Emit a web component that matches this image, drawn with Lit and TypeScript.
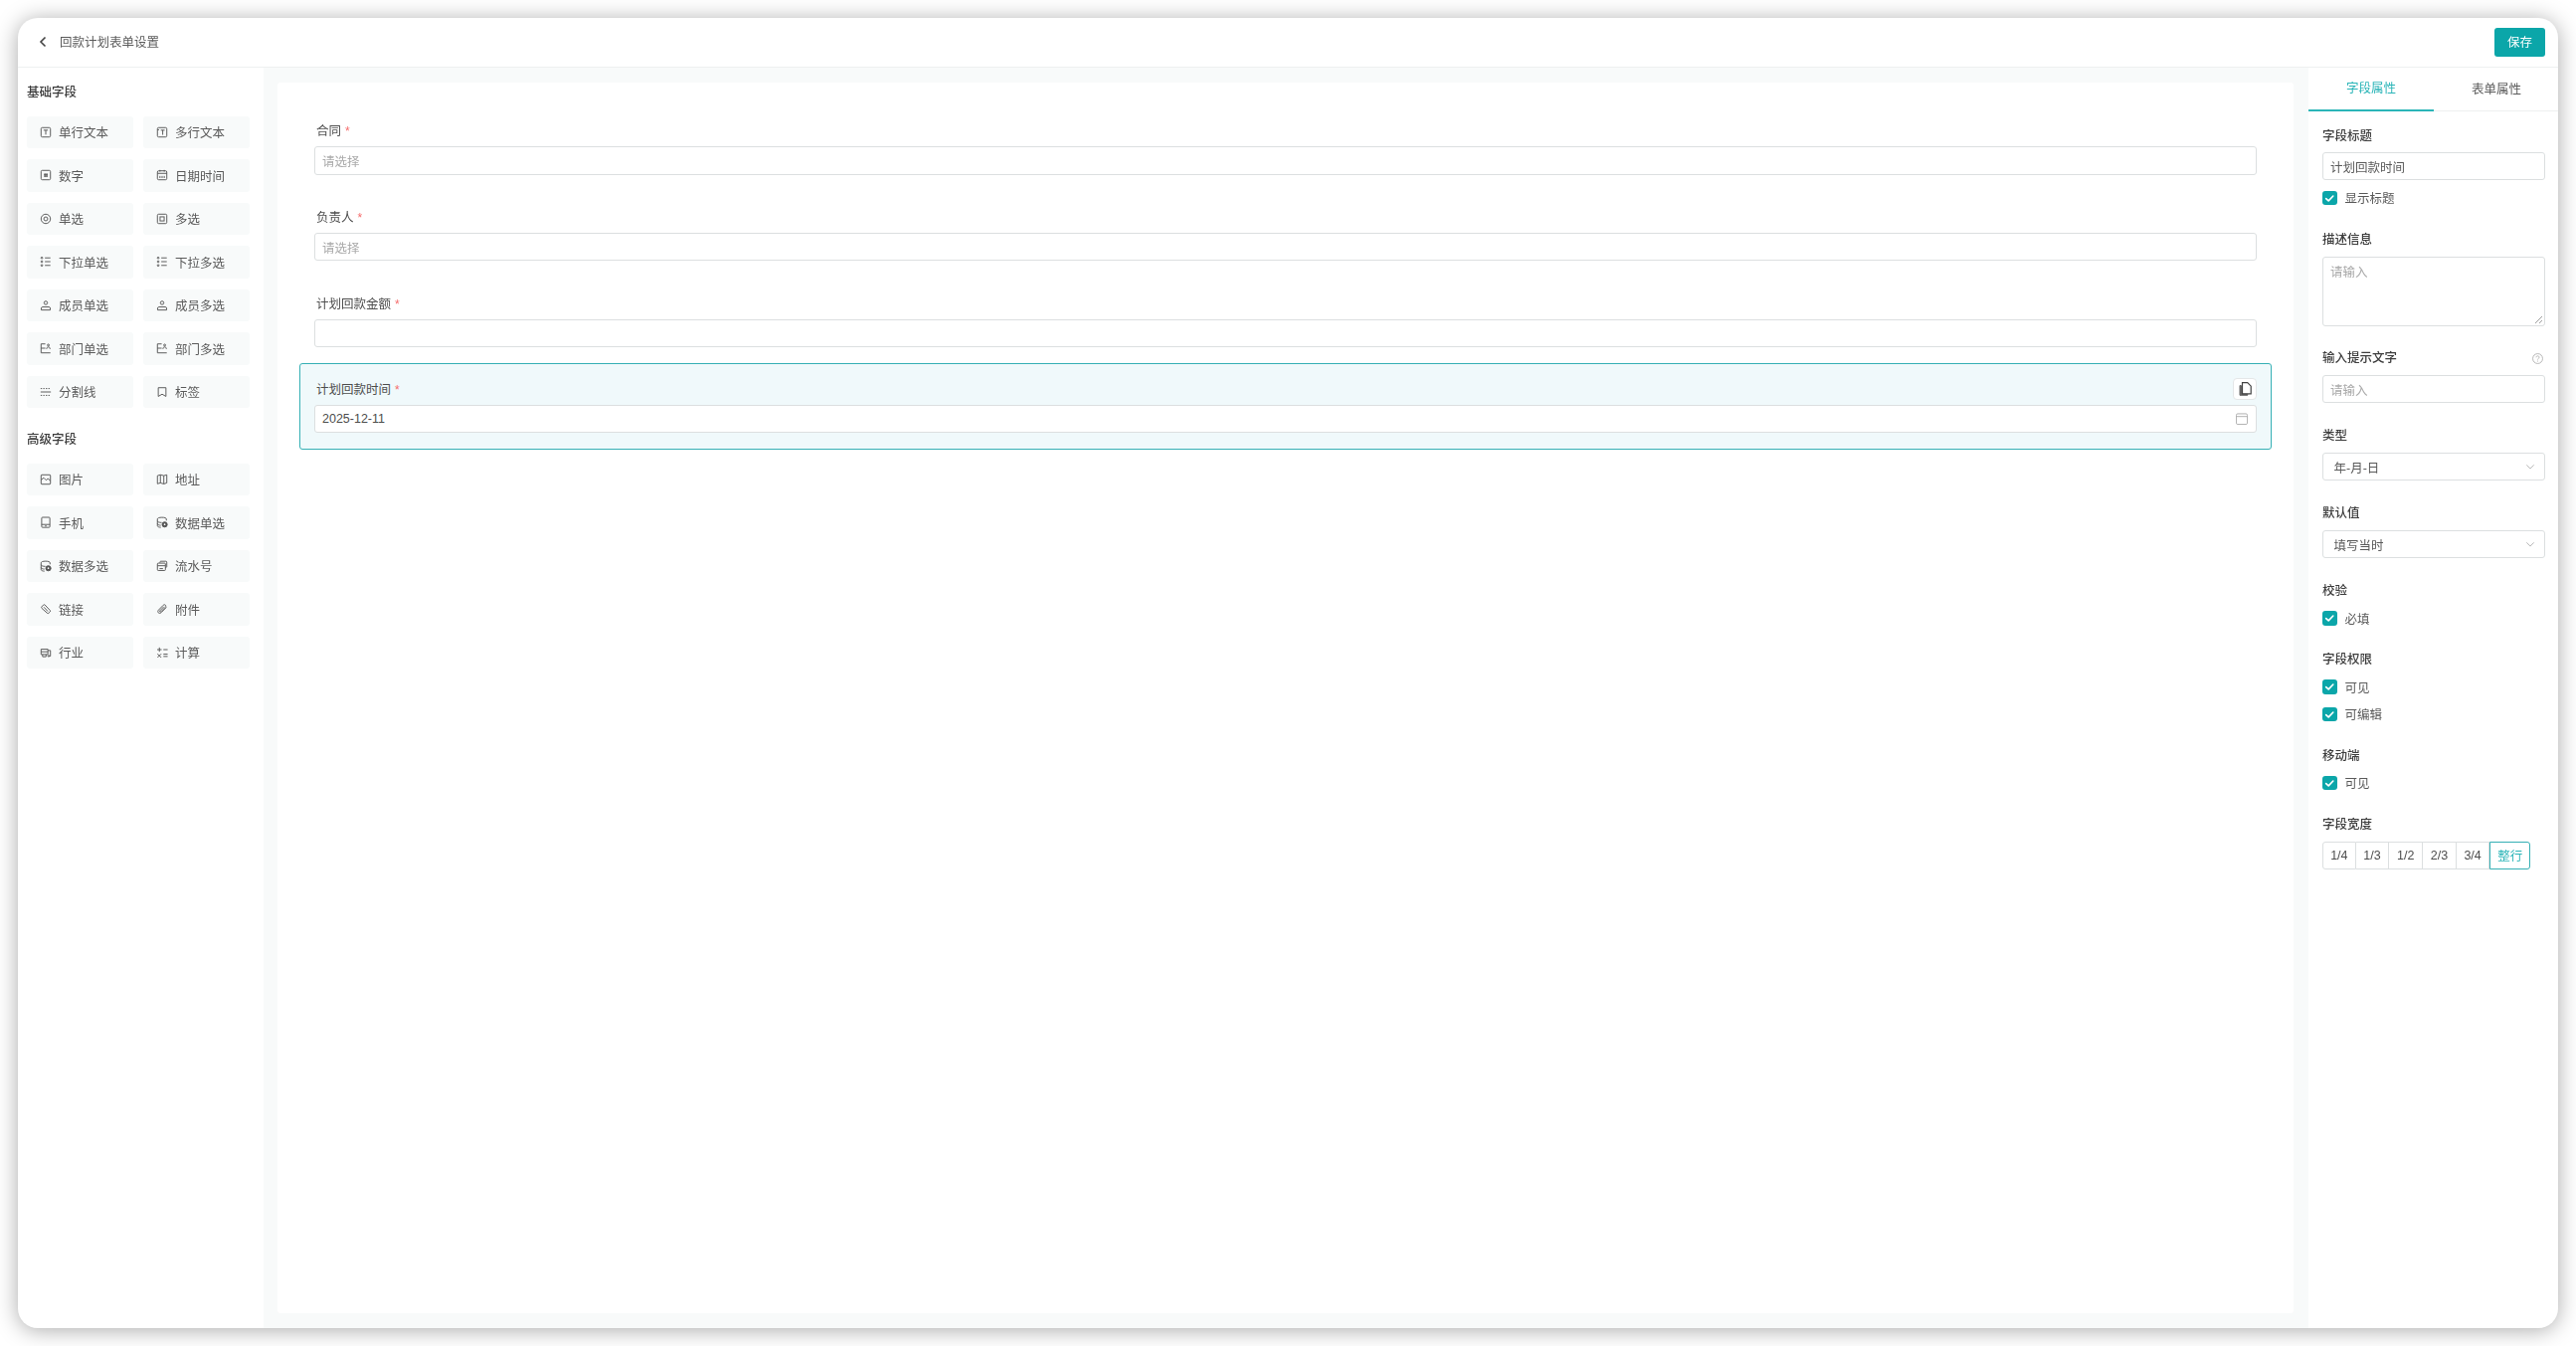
import { LitElement, html, css, svg } from "lit";
import { customElement } from "lit/decorators.js";

const ic: Record<string, unknown> = {
  text: svg`<rect x="1.5" y="1.5" width="11" height="11" rx="1.5"/><path d="M4.500 4.500h5M7 4.500v5.200"/>`,
  multi: svg`<rect x="1.5" y="1.5" width="11" height="11" rx="1.5"/><path d="M1.500 4h2M5.500 4.500h4.500M7.700 4.500v5.500"/>`,
  num: svg`<rect x="1.5" y="1.5" width="11" height="11" rx="1.5"/><path d="M6 5v4.400M8.200 5v4.400M4.800 6.200h4.600M4.800 8.200h4.600"/>`,
  date: svg`<rect x="1.5" y="2" width="11" height="10.5" rx="1.5"/><path d="M1.500 5h11M4.500 1v2M9.500 1v2M4.500 8v2.500M7 8v2.500M9.500 8v2.500"/>`,
  radio: svg`<circle cx="7" cy="7" r="5.5"/><circle cx="7" cy="7" r="2.3"/>`,
  check: svg`<rect x="1.5" y="1.5" width="11" height="11" rx="1.5"/><rect x="4.6" y="4.6" width="4.8" height="4.8"/>`,
  list: svg`<circle cx="2.4" cy="2.6" r="1"/><circle cx="2.4" cy="7" r="1"/><circle cx="2.4" cy="11.4" r="1"/><path d="M6 2.600h6.500M6 7h6.500M6 11.400h6.500"/>`,
  user: svg`<circle cx="7" cy="4" r="2"/><path d="M1.700 12.400V10.400c0-1 .7-1.600 1.600-1.600h7.400c.9 0 1.600.6 1.600 1.600v2z"/>`,
  dept: svg`<path d="M6.500 2H1.500v10.500h11M1.500 7h5"/><circle cx="10" cy="3.4" r="1.1"/><path d="M8 8c0-1.600.8-2.400 2-2.400s2 .8 2 2.400"/>`,
  div: svg`<path d="M1 3h12M1 11h12" stroke-dasharray="1.600 1.400"/><path d="M1 7h12"/>`,
  tag: svg`<path d="M2.500 2h9v10.200L7 9.600l-4.500 2.600z"/>`,
  img: svg`<rect x="1.5" y="1.5" width="11" height="11" rx=".8"/><path d="M1.500 7.500 4.600 5l2.800 2.800L9.500 6l3 2.400"/>`,
  map: svg`<path d="M1.500 2.500 5 1.500l4 1 3.500-1v9.500l-3.500 1.200-4-1.200-3.500 1z"/><path d="M5 1.500v9.500M9 2.500v9.600"/>`,
  phone: svg`<rect x="2.2" y="1.2" width="9.6" height="11.8" rx="1"/><path d="M2.200 9.600h9.600M6 11.400h2"/>`,
  data: svg`<path d="M12 5V3.200C12 2 10 1.300 6.800 1.300S1.500 2 1.500 3.200v8c0 1 1.800 1.700 4 1.800M1.500 5.600c0 1 2.200 1.800 5 1.800M1.500 8.800c0 1 1.700 1.700 4 1.800"/><circle cx="10" cy="9.6" r="3" class="dot"/><circle cx="10" cy="9.6" r="1" class="hole"/>`,
  serial: svg`<path d="M4.500 3.200V2.400c0-.6.4-1 1-1h6c.6 0 1 .4 1 1v5.200c0 .6-.4 1-1 1h-.6"/><rect x="1.5" y="3.6" width="9.4" height="8.6" rx="1"/><path d="M1.500 6.600h9.400M4 10h4"/>`,
  link: svg`<path d="M2.200 4.600 4.300 2.400c.5-.5 1.200-.5 1.700 0l6 6.400c.5.5.5 1.200 0 1.700L10.400 12c-.5.5-1.200.5-1.700 0L2.300 6.300c-.5-.5-.5-1.200-.1-1.700z"/><path d="M4.800 5l4.600 5"/>`,
  clip: svg`<path d="M12 5.200 6 11.300c-1.200 1.100-2.600 1.100-3.400.2s-.7-2.100.3-3.200l5.500-5.600c.8-.8 1.800-.8 2.500-.1s.6 1.700-.1 2.400L5.600 10.300c-.4.4-.9.4-1.200.1s-.3-.8 0-1.200l4.600-4.700"/>`,
  ind: svg`<path d="M1.500 9.200V3h8v6.200zM1.500 6h8M9.500 4.500h3v6.600h-1.500M3.300 9.200v2.600h4v-2.600"/><circle cx="10.4" cy="11" r=".9"/>`,
  calc: svg`<path d="M3.800 1v5M1.200 3.500h5.200M8.500 3.500h5M8.500 8.800h5M8.500 11.500h5M1.600 8.400l4.400 4.400M6 8.400l-4.400 4.400"/>`,
};

const basic: [string, string][] = [
  ["text", "单行文本"], ["multi", "多行文本"], ["num", "数字"], ["date", "日期时间"],
  ["radio", "单选"], ["check", "多选"], ["list", "下拉单选"], ["list", "下拉多选"],
  ["user", "成员单选"], ["user", "成员多选"], ["dept", "部门单选"], ["dept", "部门多选"],
  ["div", "分割线"], ["tag", "标签"],
];
const advanced: [string, string][] = [
  ["img", "图片"], ["map", "地址"], ["phone", "手机"], ["data", "数据单选"],
  ["data", "数据多选"], ["serial", "流水号"], ["link", "链接"], ["clip", "附件"],
  ["ind", "行业"], ["calc", "计算"],
];

const checkIcon = html`<svg viewBox="0 0 15 15" class="ck"><path d="M3.800 7.800 6.400 10.200 11.200 5.200" fill="none" stroke="#fff" stroke-width="1.700" stroke-linecap="round" stroke-linejoin="round"/></svg>`;
const caret = html`<svg viewBox="0 0 12 12" class="caret"><path d="M1.500 4 6 8.500 10.500 4" fill="none" stroke="#aaa" stroke-width="1"/></svg>`;

@customElement("app-root")
export class AppRoot extends LitElement {
  static styles = css`
    :host {
      display: block; height: 1353px; box-sizing: border-box; padding: 18px; background: #fff;
      font-family: "Liberation Sans", "Noto Sans CJK SC", sans-serif; font-size: 12.5px; color: #4d4d4d;
      overflow: hidden;
    }
    * { box-sizing: border-box; }
    .win {
      height: 1317px; border-radius: 20px; background: #fff; overflow: hidden;
      box-shadow: 0 2px 22px rgba(0, 0, 0, .34); display: flex; flex-direction: column;
      filter: blur(.3px);
    }
    .head {
      height: 50px; flex: none; border-bottom: 1px solid #eef0f0; display: flex; align-items: center;
      padding: 0 13px 0 20px;
    }
    .back { width: 10px; height: 14px; margin-right: 12px; margin-bottom: 1px; }
    .head .t { flex: 1; color: #5a5a5a; padding-bottom: 3px; }
    .save {
      width: 51px; height: 29px; border-radius: 3px; background: #0ba6a9; color: #fff; padding-bottom: 2px;
      display: flex; align-items: center; justify-content: center;
    }
    .body { flex: 1; display: flex; min-height: 0; }
    .left { width: 247px; flex: none; padding: 17px 9px 0; }
    .sect { font-weight: 500; color: #3d3d3d; line-height: 16px; margin-bottom: 15.5px; }
    .grid { display: grid; grid-template-columns: 107px 107px; column-gap: 10px; row-gap: 11px; margin-bottom: 24px; }
    .card {
      height: 32.5px; background: #f8fafa; border-radius: 3px; display: flex; align-items: center;
      padding-left: 13px; gap: 7px; color: #5a5a5a;
    }
    .card svg { width: 12px; height: 12px; flex: none; fill: none; stroke: #555; stroke-width: 1.1; }
    .card svg .dot { fill: #555; }
    .card svg .hole { fill: #fff; stroke: none; }
    .canvas { flex: 1; background: #f8fafa; padding: 15px 15px 15px 14px; min-width: 0; }
    .paper { height: 100%; background: #fff; border-radius: 3px; padding: 22.4px 22px 0; }
    .field {
      height: 86.6px; padding: 16px 14px 0; border: 1px solid transparent; border-radius: 3px; position: relative;
    }
    .field.sel { height: 87px; background: #f0f9fb; border-color: #36b0b5; }
    .lab { height: 20px; line-height: 20px; padding-left: 2px; color: #4d4d4d; margin-bottom: 5px; display: flex; }
    .req { color: #f56c6c; margin-left: 4px; font-size: 12px; }
    .inp {
      height: 28.3px; border: 1px solid #dcdfe0; border-radius: 3px; background: #fff; padding: 0 7px;
      display: flex; align-items: center; color: #4d4d4d;
    }
    .ph { color: #aaa; }
    .copy {
      position: absolute; right: 14px; top: 14px; width: 24px; height: 22px; background: #fff;
      border: 1px solid #e4e7e8; border-radius: 4px; display: flex; align-items: center; justify-content: center;
    }
    .copy svg { width: 13px; height: 14px; }
    .cal { width: 12px; height: 12px; margin-left: auto; margin-right: 1px; fill: none; stroke: #aaa; stroke-width: 1; }
    .right { width: 251px; flex: none; }
    .tabs { height: 43.5px; display: flex; border-bottom: 1px solid #eef0f0; }
    .tab { width: 126px; display: flex; align-items: center; justify-content: center; height: 43px; color: #5a5a5a; padding-bottom: 2px; }
    .tab + .tab { flex: 1; padding-left: 1px; }
    .tab.on { color: #2bb5b8; border-bottom: 2px solid #2bb5b8; height: 43.5px; }
    .pane { padding: 15px 13px 0 14px; }
    .pl { height: 20px; line-height: 20px; color: #3d3d3d; font-weight: 500; display: flex; align-items: center; justify-content: space-between; margin-bottom: 7px; }
    .g { margin-bottom: 23px; }
    .g.first { margin-bottom: 25px; }
    .g.first .pl, .g.desc .pl { margin-bottom: 6.5px; }
    .g.desc { margin-bottom: 22.5px; }
    .g.cbg { margin-bottom: 24.5px; }
    .g.cbg .pl { margin-bottom: 10px; }
    .pi { height: 28px; border: 1px solid #dcdfe0; border-radius: 3px; padding: 0 7px; display: flex; align-items: center; color: #5a5a5a; }
    .pi.sel { padding: 0 9px 0 10.5px; justify-content: space-between; }
    .ta { height: 70px; border: 1px solid #dcdfe0; border-radius: 3px; padding: 4px 7px; position: relative; }
    .ta svg { position: absolute; right: 1px; bottom: 1px; width: 9px; height: 9px; }
    .caret { width: 10px; height: 10px; }
    .cb { display: flex; align-items: center; gap: 8px; height: 14.5px; color: #5a5a5a; }
    .cb + .cb { margin-top: 13px; }
    .pi + .cb { margin-top: 10.5px; }
    .box { width: 14.5px; height: 14.5px; background: #0ba6a9; border-radius: 3px; flex: none; display: flex; }
    .ck { width: 14.5px; height: 14.5px; }
    .help { width: 11px; height: 11px; fill: none; stroke: #aaa; stroke-width: .9; margin-right: 2px; }
    .btns { display: flex; width: 209px; height: 28px; }
    .btn {
      width: 33.7px; border: 1px solid #dcdfe0; border-left: none; display: flex; align-items: center; justify-content: center; color: #4d4d4d;
    }
    .btn:first-child { border-left: 1px solid #dcdfe0; border-radius: 3px 0 0 3px; }
    .btn.on { flex: 1; border: 1px solid #36b0b5; color: #2bb5b8; border-radius: 0 3px 3px 0; }
  `;

  private card(c: [string, string]) {
    return html`<div class="card"><svg viewBox="0 0 14 14">${ic[c[0]]}</svg><span>${c[1]}</span></div>`;
  }
  private cb(t: string) {
    return html`<div class="cb"><span class="box">${checkIcon}</span><span>${t}</span></div>`;
  }
  private field(label: string, body: unknown, sel = false) {
    return html`<div class="field ${sel ? "sel" : ""}">
      <div class="lab">${label}<span class="req">*</span></div>
      ${body}
      ${sel ? html`<div class="copy"><svg viewBox="0 0 13 14"><path d="M2.500 3.500H1v9.800h7.800v-1.500" fill="#666" stroke="#666"/><path d="M3.500 .7h5.200l3.500 3.500v7.600H3.500z" fill="#fff" stroke="#444" stroke-width="1.200"/></svg></div>` : ""}
    </div>`;
  }

  render() {
    return html`<div class="win">
      <div class="head">
        <svg class="back" viewBox="0 0 10 14"><path d="M7.500 2.500 3 7l4.500 4.500" fill="none" stroke="#444" stroke-width="1.600"/></svg>
        <span class="t">回款计划表单设置</span>
        <div class="save">保存</div>
      </div>
      <div class="body">
        <div class="left">
          <div class="sect">基础字段</div>
          <div class="grid">${basic.map((c) => this.card(c))}</div>
          <div class="sect">高级字段</div>
          <div class="grid">${advanced.map((c) => this.card(c))}</div>
        </div>
        <div class="canvas">
          <div class="paper">
            ${this.field("合同", html`<div class="inp"><span class="ph">请选择</span></div>`)}
            ${this.field("负责人", html`<div class="inp"><span class="ph">请选择</span></div>`)}
            ${this.field("计划回款金额", html`<div class="inp"></div>`)}
            ${this.field("计划回款时间", html`<div class="inp"><span>2025-12-11</span><svg class="cal" viewBox="0 0 13 13"><rect x=".5" y="1" width="12" height="11.5" rx="1.5"/><path d="M.5 4h12"/></svg></div>`, true)}
          </div>
        </div>
        <div class="right">
          <div class="tabs"><div class="tab on">字段属性</div><div class="tab">表单属性</div></div>
          <div class="pane">
            <div class="g first">
              <div class="pl">字段标题</div>
              <div class="pi">计划回款时间</div>
              ${this.cb("显示标题")}
            </div>
            <div class="g desc">
              <div class="pl">描述信息</div>
              <div class="ta"><span class="ph">请输入</span><svg viewBox="0 0 9 9"><path d="M8 1 1 8M8 5 5 8" stroke="#888" stroke-width=".8"/></svg></div>
            </div>
            <div class="g">
              <div class="pl">输入提示文字<svg class="help" viewBox="0 0 12 12"><circle cx="6" cy="6" r="5.400"/><path d="M4.300 4.700c0-1 .8-1.600 1.700-1.600s1.700.6 1.700 1.500c0 1.200-1.700 1.200-1.700 2.500M6 8.300v1"/></svg></div>
              <div class="pi"><span class="ph">请输入</span></div>
            </div>
            <div class="g"><div class="pl">类型</div><div class="pi sel"><span>年-月-日</span>${caret}</div></div>
            <div class="g"><div class="pl">默认值</div><div class="pi sel"><span>填写当时</span>${caret}</div></div>
            <div class="g cbg"><div class="pl">校验</div>${this.cb("必填")}</div>
            <div class="g cbg"><div class="pl">字段权限</div>${this.cb("可见")}${this.cb("可编辑")}</div>
            <div class="g cbg"><div class="pl">移动端</div>${this.cb("可见")}</div>
            <div class="g">
              <div class="pl">字段宽度</div>
              <div class="btns">
                ${["1/4", "1/3", "1/2", "2/3", "3/4"].map((x) => html`<div class="btn">${x}</div>`)}
                <div class="btn on">整行</div>
              </div>
            </div>
          </div>
        </div>
      </div>
    </div>`;
  }
}
